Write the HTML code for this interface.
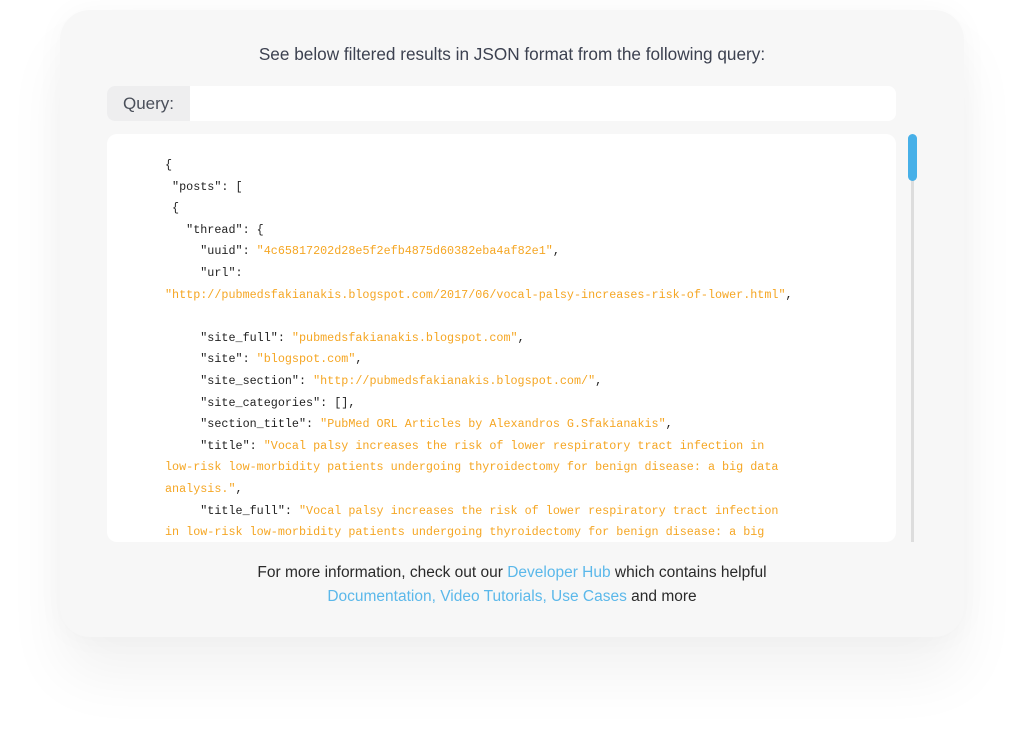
<!DOCTYPE html>
<html><head><meta charset="utf-8"><style>
*{margin:0;padding:0;box-sizing:border-box}
html,body{width:1024px;height:746px;background:#fff;overflow:hidden;font-family:"Liberation Sans",Arial,sans-serif}
.card{position:absolute;left:60px;top:10px;width:904px;height:627px;background:#f7f7f7;border-radius:30px;box-shadow:0 40px 60px rgba(0,0,0,0.05),0 0 30px rgba(0,0,0,0.03)}
.head{position:absolute;left:0;width:1024px;top:44px;text-align:center;font-size:17.2px;color:#3c4150}
.q{position:absolute;left:107px;top:86px;width:789px;height:35px;background:#fff;border-radius:8px;overflow:hidden}
.q span{display:block;width:83px;height:35px;background:#eeeeef;color:#4a4f5a;font-size:17px;line-height:35px;padding-left:16px}
.code{position:absolute;left:107px;top:134px;width:789px;height:408px;background:#fff;border-radius:10px;overflow:hidden}
pre{position:absolute;left:58px;top:21px;font-family:"Liberation Mono",monospace;font-size:11.75px;line-height:21.6px;color:#222;white-space:pre}
.s{color:#f5a623}
.track{position:absolute;left:911px;top:140px;width:3px;height:402px;background:#ddd}
.thumb{position:absolute;left:908px;top:134px;width:9px;height:47px;background:#47b0e8;border-radius:5px}
.foot{position:absolute;left:0;width:1024px;top:561px;text-align:center;font-size:15.5px;line-height:24px;color:#2a2a2a}
.foot a{color:#5bb8ea;text-decoration:none}
</style></head><body>
<div class="card"></div>
<div class="head">See below filtered results in JSON format from the following query:</div>
<div class="q"><span>Query:</span></div>
<div class="code"><pre>{
 "posts": [
 {
   "thread": {
     "uuid": <span class="s">"4c65817202d28e5f2efb4875d60382eba4af82e1"</span>,
     "url":
<span class="s">"http://pubmedsfakianakis.blogspot.com/2017/06/vocal-palsy-increases-risk-of-lower.html"</span>,

     "site_full": <span class="s">"pubmedsfakianakis.blogspot.com"</span>,
     "site": <span class="s">"blogspot.com"</span>,
     "site_section": <span class="s">"http://pubmedsfakianakis.blogspot.com/"</span>,
     "site_categories": [],
     "section_title": <span class="s">"PubMed ORL Articles by Alexandros G.Sfakianakis"</span>,
     "title": <span class="s">"Vocal palsy increases the risk of lower respiratory tract infection in</span>
<span class="s">low-risk low-morbidity patients undergoing thyroidectomy for benign disease: a big data</span>
<span class="s">analysis."</span>,
     "title_full": <span class="s">"Vocal palsy increases the risk of lower respiratory tract infection</span>
<span class="s">in low-risk low-morbidity patients undergoing thyroidectomy for benign disease: a big</span>
</pre></div>
<div class="track"></div>
<div class="thumb"></div>
<div class="foot">For more information, check out our <a>Developer Hub</a> which contains helpful<br><a>Documentation, Video Tutorials, Use Cases</a> and more</div>
</body></html>
